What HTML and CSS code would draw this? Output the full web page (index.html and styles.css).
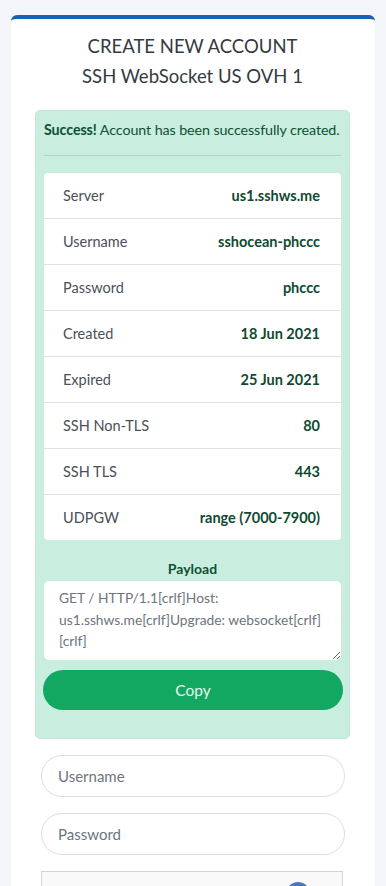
FILE: index.html
```html
<!DOCTYPE html>
<html>
<head>
  <link rel="stylesheet" href="styles.css">
</head>
<body>
  <div class="card">
    <h1 class="title">CREATE NEW ACCOUNT<br>SSH WebSocket US OVH 1</h1>

    <div class="alert">
      <p class="alert-msg"><strong>Success!</strong> Account has been successfully created.</p>
      <hr />
      <ul class="details">
        <li><span class="label">Server</span><span class="value">us1.sshws.me</span></li>
        <li><span class="label">Username</span><span class="value">sshocean-phccc</span></li>
        <li><span class="label">Password</span><span class="value">phccc</span></li>
        <li><span class="label">Created</span><span class="value">18 Jun 2021</span></li>
        <li><span class="label">Expired</span><span class="value">25 Jun 2021</span></li>
        <li><span class="label">SSH Non-TLS</span><span class="value">80</span></li>
        <li><span class="label">SSH TLS</span><span class="value">443</span></li>
        <li><span class="label">UDPGW</span><span class="value">range (7000-7900)</span></li>
      </ul>
      <div class="payload-title">Payload</div>
      <textarea class="payload" rows="3">GET / HTTP/1.1[crlf]Host: us1.sshws.me[crlf]Upgrade: websocket[crlf][crlf]</textarea>
      <button class="copy-btn">Copy</button>
    </div>

    <form class="create-form">
      <input type="text" class="field" placeholder="Username" />
      <input type="password" class="field" placeholder="Password" />
      <div class="captcha">
        <span class="captcha-logo"></span>
      </div>
    </form>
  </div>
</body>
</html>
```

FILE: styles.css
```css
html {
  overflow: hidden;
}

body {
  margin: 0;
  background-color: #f4f5f8;
  font-family: "Lato", "Open Sans", sans-serif;
  height: 886px;
  overflow: hidden;
}

.card {
  margin: 15px 11px 0;
  background-color: #fff;
  border-top: 4px solid #1a62b0;
  border-radius: 6px 6px 0 0;
  padding: 12px 25px 0 24px;
}

.title {
  margin: 0;
  text-align: center;
  font-weight: normal;
  font-size: 18.5px;
  line-height: 30px;
  color: #343a40;
}

.alert {
  margin-top: 19px;
  background-color: #c9eee0;
  border: 1px solid #bfe6d6;
  border-radius: 5px;
  padding: 9px 8px 28px;
  color: #0f5132;
}

.alert-msg {
  margin: 0;
  font-size: 14.3px;
  line-height: 20px;
  letter-spacing: -0.1px;
  white-space: nowrap;
}

.alert hr {
  border: none;
  border-top: 1px solid #a8d9c5;
  margin: 15px 0 17px;
}

.details {
  list-style: none;
  margin: 0;
  padding: 0;
  background-color: #fff;
  border-radius: 4px;
}

.details li {
  display: flex;
  justify-content: space-between;
  align-items: center;
  height: 45px;
  padding: 0 21px 0 19px;
  border-bottom: 1px solid #dfe3e6;
  font-size: 14.5px;
}

.details li:last-child {
  border-bottom: none;
}

.label {
  color: #495057;
}

.value {
  font-weight: bold;
  color: #0f4a30;
}

.payload-title {
  text-align: center;
  font-weight: bold;
  font-size: 14px;
  margin-top: 20px;
  line-height: 18px;
}

.payload {
  display: block;
  box-sizing: border-box;
  width: 100%;
  height: 79px;
  margin-top: 3px;
  border: none;
  border-radius: 5px;
  padding: 6px 15px;
  font-family: "Lato", "Open Sans", sans-serif;
  font-size: 13.8px;
  line-height: 21.5px;
  color: #6c757d;
  resize: vertical;
}

.copy-btn {
  display: block;
  width: 300px;
  height: 40px;
  margin: 10px 0 0 -1px;
  border: none;
  border-radius: 20px;
  background-color: #13a862;
  color: #e4f7ee;
  font-family: "Lato", "Open Sans", sans-serif;
  font-size: 15.5px;
}

.create-form {
  display: flex;
  flex-direction: column;
  gap: 16px;
  padding: 16px 5px 0 6px;
}

.field {
  box-sizing: border-box;
  height: 42px;
  border: 1px solid #dcdfe2;
  border-radius: 21px;
  padding: 0 16px;
  font-family: "Lato", "Open Sans", sans-serif;
  font-size: 15px;
  color: #495057;
}

.field::placeholder {
  color: #6c757d;
}

.captcha {
  position: relative;
  height: 70px;
  margin-right: 2px;
  border: 1px solid #d3d3d3;
  background-color: #f9f9f9;
}

.captcha-logo {
  position: absolute;
  top: 10px;
  right: 32px;
  width: 24px;
  height: 24px;
  border-radius: 50%;
  background-color: #4a76c1;
}
```
